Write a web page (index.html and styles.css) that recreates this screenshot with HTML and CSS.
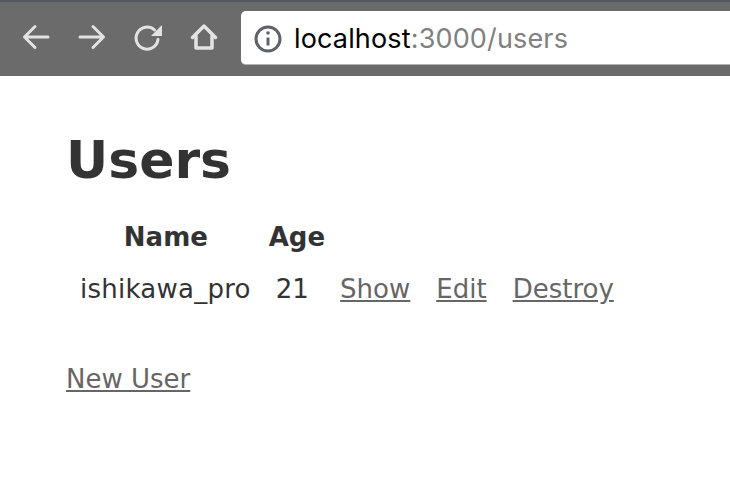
FILE: index.html
```html
<!DOCTYPE html>
<html lang="en">
<head>
<meta charset="utf-8">
<title>Users</title>
<link rel="stylesheet" href="styles.css">
</head>
<body>
<header class="toolbar">
  <nav class="nav-icons">
    <svg class="icon" viewBox="0 0 30 30"><path d="M27 15H3.500M14 4.500L3.500 15 14 25.500"/></svg>
    <svg class="icon" viewBox="0 0 30 30"><path d="M3 15h23.500M16 4.500L26.500 15 16 25.500"/></svg>
    <svg class="icon" viewBox="0 0 30 30"><path d="M25 17.500a11 11 0 1 1-3.500-9.500"/><path class="solid" d="M29 3v11H18z"/></svg>
    <svg class="icon icon-home" viewBox="0 0 30 30"><path d="M3.500 15.500L15 4l11.500 11.500"/><path d="M7 14v12h16V14"/></svg>
  </nav>
  <div class="address">
    <svg class="info" viewBox="0 0 28 28"><circle cx="14" cy="14" r="12"/><path d="M14 12.500v8"/><circle class="dot" cx="14" cy="8" r="1.800"/></svg>
    <span class="host">localhost</span><span class="rest">:3000/users</span>
  </div>
</header>
<main class="content">
  <h1 class="title">Users</h1>
  <table class="users">
    <thead>
      <tr><th class="name-head">Name</th><th class="age-head">Age</th><th colspan="3"></th></tr>
    </thead>
    <tbody>
      <tr>
        <td class="username">ishikawa_pro</td>
        <td class="age">21</td>
        <td><a href="#">Show</a></td>
        <td><a href="#">Edit</a></td>
        <td><a href="#">Destroy</a></td>
      </tr>
    </tbody>
  </table>
  <a class="new-user" href="#">New User</a>
</main>
</body>
</html>
```
FILE: styles.css
```css
html, body {
  margin: 0;
  padding: 0;
  background: #fff;
}
body {
  width: 730px;
  height: 482px;
  overflow: hidden;
  color: #333;
  font-family: "DejaVu Sans", Verdana, sans-serif;
}
.toolbar {
  box-sizing: border-box;
  height: 76px;
  display: flex;
  align-items: flex-start;
  background: #6b6b6b;
  border-top: 2px solid #55585c;
  padding-top: 9px;
}
.nav-icons {
  display: flex;
  gap: 26px;
  padding-left: 21px;
  padding-top: 11px;
  width: 241px;
  box-sizing: border-box;
  flex: none;
}
.icon {
  width: 30px;
  height: 30px;
  flex: none;
  fill: none;
  stroke: #e3e3e3;
  stroke-width: 3;
  stroke-linecap: round;
  stroke-linejoin: round;
}
.icon-home {
  stroke-width: 3.5;
}
.icon .solid {
  fill: #e3e3e3;
  stroke: none;
}
.address {
  flex: 1;
  height: 54px;
  display: flex;
  align-items: center;
  background: #fff;
  border-radius: 5px 0 0 5px;
  border-bottom: 1px solid #b5b5b5;
  box-sizing: border-box;
  padding-left: 13px;
  padding-top: 2px;
  font-family: Inter, "Noto Sans", sans-serif;
  font-size: 27px;
  letter-spacing: 0.15px;
}
.info {
  width: 28px;
  height: 28px;
  margin-right: 12px;
  fill: none;
  stroke: #5f6368;
  stroke-width: 3;
}
.info .dot {
  fill: #5f6368;
  stroke: none;
}
.host { color: #000; }
.rest { color: #808080; }
.content {
  padding: 0 66px;
}
.title {
  margin: 52px 0 0;
  font-size: 52px;
  line-height: 64px;
  font-weight: 700;
}
.users {
  border-collapse: separate;
  border-spacing: 0;
  margin-top: 21px;
  font-size: 26px;
}
.users th {
  font-size: 26px;
  font-weight: 700;
  text-align: center;
  padding: 8px 4px 6px;
  line-height: 32px;
}
.users .name-head {
  padding-left: 6px;
}
.users .age-head {
  padding-left: 5px;
  padding-right: 2px;
}
.users td {
  padding: 14px 13px 12px;
  line-height: 32px;
}
.users .username {
  padding-left: 14px;
  letter-spacing: 0.25px;
}
.users .age {
  padding-left: 12px;
}
a { color: #666; }
.new-user {
  display: block;
  width: max-content;
  margin-top: 46px;
  font-size: 26px;
  line-height: 32px;
}
```
